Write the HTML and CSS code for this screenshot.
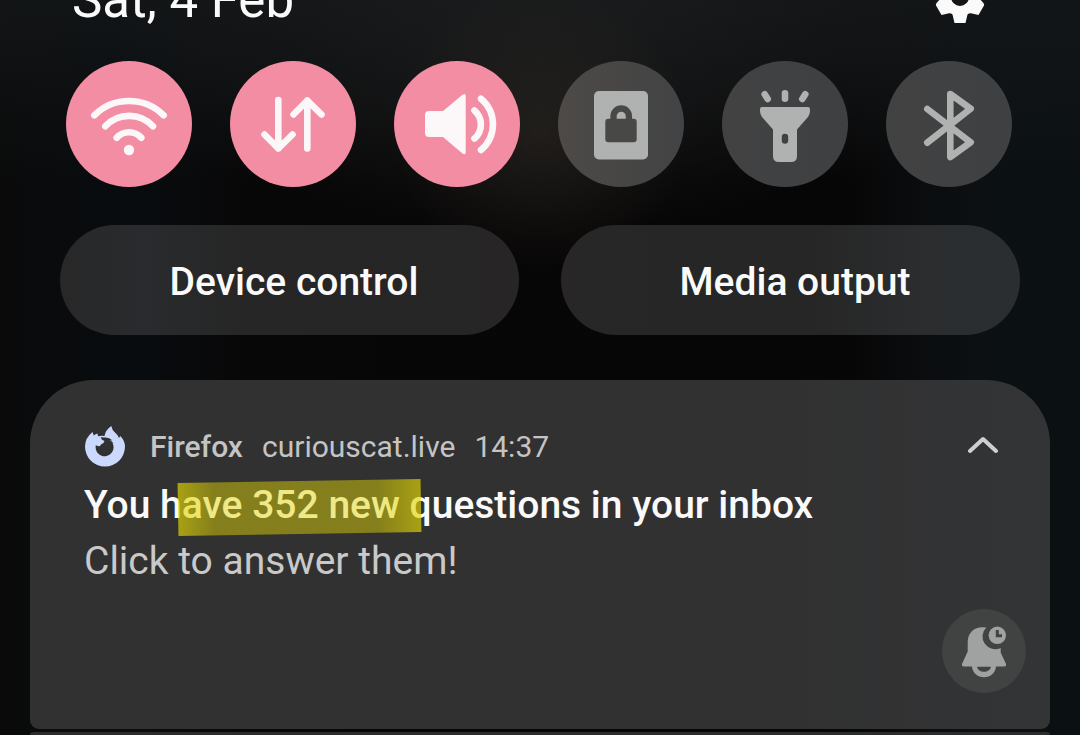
FILE: index.html
```html
<!DOCTYPE html>
<html lang="en">
<head>
    <meta charset="UTF-8">
    <meta name="viewport" content="width=device-width, initial-scale=1.0">
    <title>Notifications</title>
    <link rel="stylesheet" href="styles.css">
</head>
<body>
    <header class="status">
        <h1 class="date">Sat, 4 Feb</h1>
        <button class="settings" aria-label="Settings">
            <svg viewBox="-26 -26 52 52" fill="#fafafa">
                <path fill-rule="evenodd" d="M-5.500 26L-7.500 17.500Q-9.500 15.500 -12 16.500L-18.500 18L-24 8.500Q-24.500 7 -23 5.500L-18 0L-23 -5.500Q-24.500 -7 -24 -8.500L-18.500 -18L-12 -16.500Q-9.500 -15.500 -7.500 -17.500L-5.500 -26H5.500L7.500 -17.500Q9.500 -15.500 12 -16.500L18.500 -18L24 -8.500Q24.500 -7 23 -5.500L18 0L23 5.500Q24.500 7 24 8.500L18.500 18L12 16.500Q9.500 15.500 7.500 17.500L5.500 26ZM9 0A9 9 0 1 0 -9 0A9 9 0 1 0 9 0Z"/>
            </svg>
        </button>
    </header>

    <div class="toggles">
        <button class="toggle on" aria-label="Wi-Fi">
            <svg viewBox="0 0 126 126">
                <g class="line">
                    <path d="M28.300 54.300A49.300 49.300 0 0 1 97.700 54.300"/>
                    <path d="M39.300 65.300A32.500 32.500 0 0 1 87 65.300"/>
                    <path d="M50.700 76.700A16.500 16.500 0 0 1 75.300 76.700"/>
                </g>
                <circle class="solid" cx="63" cy="89" r="5.200"/>
            </svg>
        </button>
        <button class="toggle on" aria-label="Mobile data">
            <svg viewBox="0 0 126 126">
                <g class="line">
                    <path d="M48.300 39V87.500M34.500 73.500L48.300 87.500L62.500 73.500"/>
                    <path d="M77.300 87.500V39.500M63.500 53.500L77.300 39.500L91.500 53.500"/>
                </g>
            </svg>
        </button>
        <button class="toggle on" aria-label="Sound">
            <svg viewBox="0 0 126 126">
                <path class="solid" d="M35 50H49L68.500 33.800Q71.700 31.800 71.700 35V91Q71.700 94.500 68.500 92.500L49 76H35Q31 76 31 72V54Q31 50 35 50Z"/>
                <g class="line">
                    <path d="M80.500 49.500A18.500 18.500 0 0 1 80.500 77.500"/>
                    <path d="M87 37.700A33.500 33.500 0 0 1 87 89"/>
                </g>
            </svg>
        </button>
        <button class="toggle" aria-label="Lock rotation">
            <svg viewBox="0 0 126 126">
                <rect class="solid" x="36" y="30" width="54" height="68.500" rx="5"/>
                <rect x="47.300" y="57.700" width="31.400" height="23.500" rx="3" fill="#484847"/>
                <path d="M55.500 60V55.200A7.700 7.700 0 0 1 70.900 55.200V60" fill="none" stroke="#484847" stroke-width="6.300"/>
            </svg>
        </button>
        <button class="toggle" aria-label="Flashlight">
            <svg viewBox="0 0 126 126">
                <path class="solid" fill-rule="evenodd" d="M40 46H86Q88 46 88 48V50Q88 53 86 56L75 68.500V95Q75 101 69 101H57Q51 101 51 95V68.500L40 56Q38 53 38 50V48Q38 46 40 46ZM59.800 76V79.500A3.200 3.200 0 0 0 66.200 79.500V76A3.200 3.200 0 0 0 59.800 76Z"/>
                <path class="line" d="M63 32.300V37.700M42.700 33.300L45.700 38M83.300 33.300L80.300 38"/>
            </svg>
        </button>
        <button class="toggle" aria-label="Bluetooth">
            <svg viewBox="0 0 126 126">
                <path class="line" d="M41.300 48L84.700 81.300L64.300 96V33L84.700 47.700L41.300 81.700"/>
            </svg>
        </button>
    </div>

    <div class="controls">
        <button class="control">Device control</button>
        <button class="control">Media output</button>
    </div>

    <main class="notification">
        <div class="source">
            <svg class="app-icon" viewBox="0 0 42 42">
                <path fill="#ccd9ff" fill-rule="evenodd" d="M8.500 7L9.800 10.500Q11.500 9 13.500 8.500L14 11.300Q17 10.500 20.500 11Q21.500 5 27.300 1Q28 5 31 7.500Q34 10 35 13L36.300 11Q41 16 41 21.500A20 20 0 0 1 1 21.500Q1 13 8.500 7ZM16.500 12.300L18 14.800L20.500 16Q20 18.500 17 19.500Q16.500 21.500 14.500 21.300L11.800 20.300A9 9 0 1 0 28.500 18L29.500 18.300Q28 16 25.500 15.500H28.500Q25 12 20.500 12.500Z"/>
            </svg>
            <span class="app-name">Firefox</span>
            <span>curiouscat.live</span>
            <time>14:37</time>
            <button class="collapse" aria-label="Collapse">
                <svg viewBox="0 0 32 20" fill="none" stroke="#cfcfd0" stroke-width="4" stroke-linecap="round" stroke-linejoin="round">
                    <path d="M2 15L15 3L28 15"/>
                </svg>
            </button>
        </div>
        <h2 class="title">You have 352 new questions in your inbox</h2>
        <p class="message">Click to answer them!</p>
        <button class="snooze" aria-label="Snooze notification">
            <svg viewBox="0 0 84 84" fill="#a0a1a1">
                <path d="M44.300 18.500A12.700 12.700 0 0 0 58.700 39V43.500L64 55Q64.500 57.500 62 57.500H22Q19.500 57.500 20 55L25.700 42.500V33C25.700 24 32 18 41 18.200Z"/>
                <path fill-rule="evenodd" d="M30 57H54A12 11.300 0 0 1 30 57ZM35 57.500C36 64.500 48 64.500 49 57.500Z"/>
                <circle cx="55.300" cy="26.300" r="8.700"/>
                <path d="M55.300 21V26.800H60" fill="none" stroke="#414343" stroke-width="3"/>
            </svg>
        </button>
    </main>
    <div class="next-notification"></div>
</body>
</html>
```
FILE: styles.css
```css
* {
    box-sizing: border-box;
}
body {
    display: flex;
    flex-direction: column;
    margin: 0;
    height: 100vh;
    overflow: hidden;
    font-family: Roboto, sans-serif;
    color: #fafafa;
    background:
        radial-gradient(ellipse 150px 140px at 540px 130px, rgba(48, 42, 36, 0.5), transparent),
        radial-gradient(ellipse 440px 240px at 50% 0, #1a1b1c, transparent),
        linear-gradient(rgba(20, 23, 25, 0.8), transparent 180px),
        linear-gradient(90deg, #0a0a0a, #080c0f 13%, #080707 24%, #070606 78%, #0c1013 90%, #0b1014);
}
h1, h2, p {
    margin: 0;
}
button {
    display: flex;
    align-items: center;
    justify-content: center;
    padding: 0;
    border: none;
    background: none;
    color: inherit;
    font-family: inherit;
    cursor: pointer;
}
svg {
    display: block;
    width: 100%;
}

/* scrolled partly off the top */
.status {
    display: flex;
    justify-content: space-between;
    align-items: center;
    margin-top: -29px;
    padding: 0 94px 0 72px;
}
.date {
    font-size: 51px;
    font-weight: 400;
    line-height: 58px;
}
.settings {
    width: 52px;
    margin-bottom: 6px;
}

.toggles {
    display: flex;
    justify-content: space-between;
    margin-top: 32px;
    padding: 0 68px 0 66px;
}
.toggle {
    width: 126px;
    height: 126px;
    border-radius: 50%;
    background: linear-gradient(90deg, #424242, #3e4042);
    color: #b0b1b1;
}
.toggle:nth-child(4) {
    background: linear-gradient(90deg, #4d4a47, #424344);
}
.toggle.on {
    background: #f38da3;
    color: #fcf8f9;
}
.solid {
    fill: currentColor;
}
.line {
    fill: none;
    stroke: currentColor;
    stroke-width: 6.600;
    stroke-linecap: round;
    stroke-linejoin: round;
}

.controls {
    display: flex;
    gap: 42px;
    margin: 38px 60px 45px;
}
.control {
    flex: 1;
    height: 110px;
    padding: 4px 0 0 9px;
    border-radius: 55px;
    background: linear-gradient(90deg, #282829, #292b2e 18%, #262626 40%, #272525);
    font-size: 39px;
    font-weight: 500;
}
.control + .control {
    background: linear-gradient(90deg, #282626, #262626 55%, #2b2d2f 80%, #2a2e31);
}

.notification {
    position: relative;
    flex: none;
    height: 349px;
    margin: 0 30px;
    padding: 44px 50px 0 54px;
    border-radius: 64px 64px 9px 9px;
    background: linear-gradient(90deg, #313131 70%, #333436);
}
.source {
    display: flex;
    align-items: center;
    gap: 19px;
    height: 44px;
    color: #c4c4c4;
    font-size: 30px;
}
.app-icon {
    width: 42px;
    margin-right: 5px;
}
.app-name {
    font-weight: 500;
}
.collapse {
    width: 32px;
    margin-left: auto;
}
.title {
    position: relative;
    margin-top: 9px;
    font-size: 39px;
    font-weight: 500;
    line-height: 56px;
}
/* marker stroke over part of the title */
.title::after {
    content: "";
    position: absolute;
    top: 4px;
    left: 94px;
    width: 243px;
    height: 53px;
    transform: rotate(-1deg);
    background: linear-gradient(90deg, rgba(226, 214, 5, 0.68), rgba(226, 214, 5, 0.47) 15%, rgba(226, 214, 5, 0.47) 82%, rgba(226, 214, 5, 0.68));
}
.message {
    color: #c9c9c9;
    font-size: 39px;
    line-height: 56px;
}
.snooze {
    position: absolute;
    right: 24px;
    bottom: 36px;
    width: 84px;
    height: 84px;
    border-radius: 50%;
    background: #414343;
}
.next-notification {
    flex: 1;
    margin: 3px 30px 0;
    border-radius: 9px 9px 0 0;
    background: #2c2c2d;
}
```
